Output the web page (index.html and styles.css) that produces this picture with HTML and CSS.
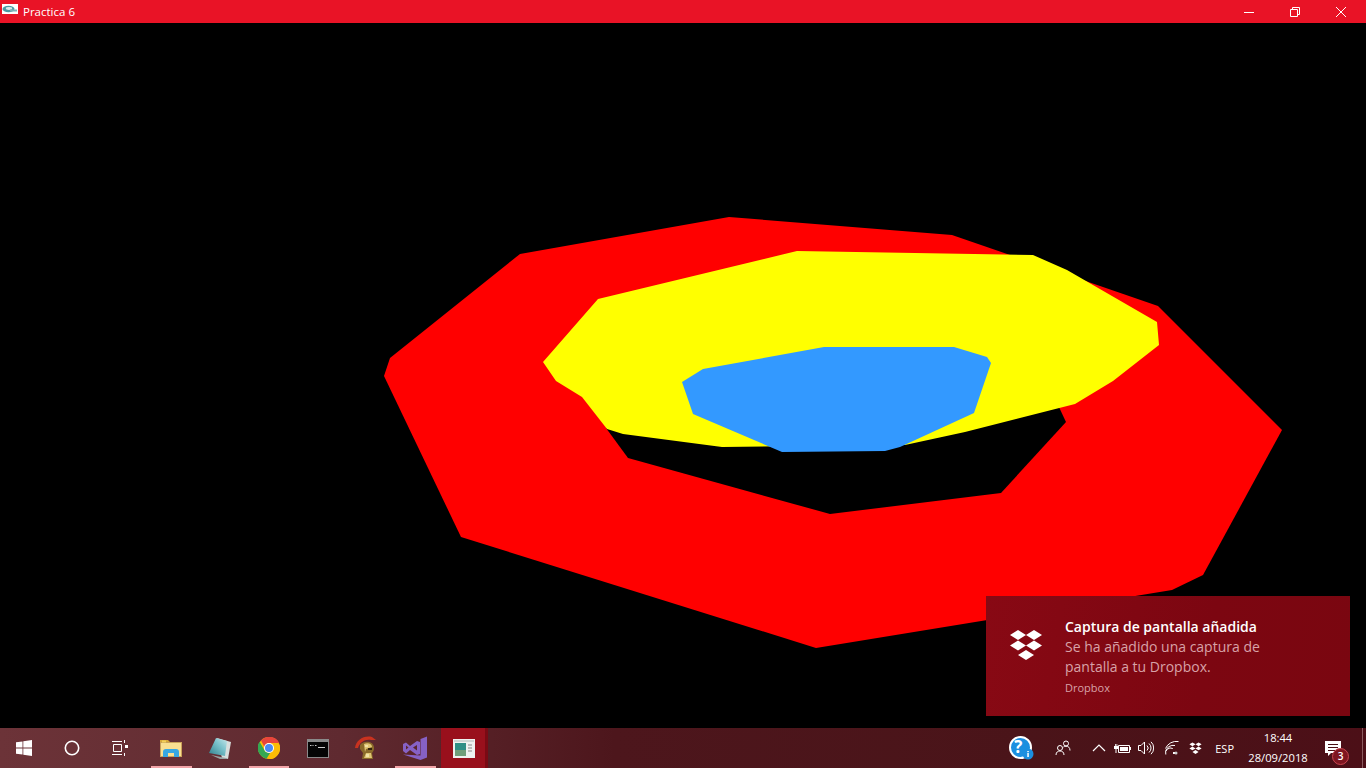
FILE: index.html
```html
<!DOCTYPE html>
<html lang="es">
<head>
<meta charset="utf-8">
<title>Practica 6</title>
<link rel="stylesheet" href="styles.css">
</head>
<body>
<header class="titlebar">
  <svg class="app-icon" width="16" height="16" viewBox="0 0 16 16"><rect y="2" width="16" height="10" fill="#fff"/><ellipse cx="6.500" cy="7" rx="6" ry="3.200" fill="#4a98a2"/><ellipse cx="7" cy="6.500" rx="3.200" ry="1.400" fill="#d9e8ea"/><rect x="8" y="7.500" width="7" height="2" fill="#7fb2b9"/></svg>
  <span class="title">Practica 6</span>
  <div class="win-controls">
    <button class="win-btn"><svg width="12" height="12" viewBox="0 0 12 12"><path d="M1 6.500h10" stroke="#fff" fill="none"/></svg></button>
    <button class="win-btn"><svg width="12" height="12" viewBox="0 0 12 12"><path d="M1.500 3.500h7v7h-7zM3.500 3.500v-2h7v7h-2" stroke="#fff" fill="none"/></svg></button>
    <button class="win-btn"><svg width="12" height="12" viewBox="0 0 12 12"><path d="M1 1l10 10M11 1L1 11" stroke="#fff" fill="none"/></svg></button>
  </div>
</header>
<main class="canvas">
  <svg class="scene" width="1366" height="705" viewBox="0 23 1366 705">
    <polygon fill="#ff0000" points="729,217 952,235 1158,306 1282,430 1203,575 1172,590 816,648 461,537 384,376 390,358 520,254"/>
    <polygon fill="#000000" points="1058,405 1066,422 1001,493 830,514 628,458 606,428 800,400"/>
    <polygon fill="#ffff00" points="797,251 1033,255 1067,270 1157,322 1159,345 1113,381 1075,404 965,432 905,445 722,447 623,434 607,429 582,397 556,381 543,362 598,299"/>
    <polygon fill="#3399ff" points="824,347 954,347 987,357 991,363 974,413 900,447 885,451 782,452 693,414 682,382 703,369"/>
  </svg>
  <aside class="toast">
    <svg class="toast-logo" width="34" height="31" viewBox="0 0 34 31"><path fill="#fff" d="M9 1l8 5-8 5-8-5zM25 1l8 5-8 5-8-5zM9 11.500l8 5-8 5-8-5zM25 11.500l8 5-8 5-8-5zM17 21l8 5-8 5-8-5z"/></svg>
    <div class="toast-body">
      <div class="toast-title">Captura de pantalla añadida</div>
      <div class="toast-text">Se ha añadido una captura de<br>pantalla a tu Dropbox.</div>
      <div class="toast-source">Dropbox</div>
    </div>
  </aside>
</main>
<footer class="taskbar">
  <div class="task-left">
    <div class="slot"><svg width="16" height="16" viewBox="0 0 16 16"><path fill="#fff" d="M0 2.300l6.500-.9v6.200H0zM7.300 1.300L16 0v7.600H7.300zM0 8.400h6.500v6.200L0 13.700zM7.300 8.400H16V16l-8.700-1.300z"/></svg></div>
    <div class="slot"><svg width="16" height="16" viewBox="0 0 16 16"><circle cx="8" cy="8" r="6.700" fill="none" stroke="#fff" stroke-width="1.600"/></svg></div>
    <div class="slot slot-view"><svg width="16" height="16" viewBox="0 0 16 16"><path fill="none" stroke="#fff" d="M0 1.500h10M0 14.500h10M1.500 4.500h8v7h-8zM12.500 0v3M12.500 13v3"/><rect x="13" y="5" width="3" height="3" fill="#fff"/></svg></div>
    <div class="slot app open"><svg width="22" height="18" viewBox="0 0 22 18"><path fill="#d9a93a" d="M0 1h8l2 2h12v3H0z"/><rect x=".5" y="3.500" width="21" height="14" fill="#f9df91" stroke="#c9a25a"/><rect x="2" y="1.500" width="4" height="2" fill="#f4d15a"/><path fill="#37a7e2" d="M3 18v-5a3 3 0 013-3h10a3 3 0 013 3v5h-5v-4H8v4z"/></svg></div>
    <div class="slot app"><svg width="22" height="21" viewBox="0 0 22 21"><defs><linearGradient id="note" x1="0" y1="1" x2="1" y2="0"><stop offset="0" stop-color="#2f7f8c"/><stop offset=".6" stop-color="#7cc3cc"/><stop offset="1" stop-color="#c8e6ea"/></linearGradient></defs><path fill="#d8dedd" d="M8 0l14 4-3 17-6-1z"/><path fill="#9aa3a3" d="M2 17l15 3 2 1-8 0z"/><path fill="url(#note)" d="M7 0l11 3-2 15L0 15z"/></svg></div>
    <div class="slot app open"><svg width="22" height="22" viewBox="0 0 22 22"><circle cx="11" cy="11" r="11" fill="#fbbc05"/><path fill="#e8453c" d="M11 6h10.200A11 11 0 003 3.500L7 11a4 4 0 014-5z"/><path fill="#fbbc05" transform="rotate(120 11 11)" d="M11 6h10.200A11 11 0 003 3.500L7 11a4 4 0 014-5z"/><path fill="#34a853" transform="rotate(240 11 11)" d="M11 6h10.200A11 11 0 003 3.500L7 11a4 4 0 014-5z"/><circle cx="11" cy="11" r="5" fill="#fff"/><circle cx="11" cy="11" r="4" fill="#4a8af4"/></svg></div>
    <div class="slot app"><svg width="22" height="19" viewBox="0 0 22 19"><rect width="22" height="19" fill="#8a8a8a"/><rect x="1" y="3" width="20" height="15" fill="#050505"/><path fill="none" stroke="#ccc" d="M3 6.500h1.500M5.500 6.500h1M8 6.500h1.500M11 8.500h7"/></svg></div>
    <div class="slot app"><svg width="22" height="24" viewBox="0 0 22 24"><path fill="#c8321f" d="M0 12C1 4 9-1 17 1l4 3-5 0C10 3 5 6 3 12z"/><path fill="#8a6a2a" d="M5 9c4-5 13-4 14 2 .5 3-1 5-2 6l1 6H7l1-6-3-4z"/><path fill="#e0c674" d="M9 8c4-2 8 0 8 3l-6 2-1 3zM11 17h5l1 5H9z"/><path fill="#f1e2a4" d="M11 18h3v3h-3zM10 9h3v2h-3z"/><path fill="#33240c" d="M13 12h4v2h-4z"/></svg></div>
    <div class="slot app open"><svg width="24" height="24" viewBox="0 0 24 24"><path fill="#8661c5" d="M17.500 3L24 .5V21.500L17.500 24 0 18.500l17.500 1z"/><path fill="#8661c5" fill-rule="evenodd" d="M0 8l3-1.500 4 3.500 7-5 3 1v12l-3 1-7-5-4 3.500L0 15zM3 9.500v4l2.500-2zM10 11.500l4 3V9z"/></svg></div>
    <div class="slot app active"><svg width="22" height="19" viewBox="0 0 22 19"><rect width="22" height="19" fill="#eef2f0"/><rect x="1" y="1" width="20" height="2" fill="#cfd6d4"/><rect x="2" y="4" width="11" height="13" fill="#2f8f86"/><rect x="2" y="11" width="11" height="6" fill="#6f9e7a"/><path stroke="#888" d="M15 6h4M15 9h4M15 12h4" fill="none"/></svg><span class="active-edge"></span></div>
  </div>
  <div class="tray">
    <svg class="tray-help" width="25" height="25" viewBox="0 0 25 25"><circle cx="11.500" cy="11.500" r="10.500" fill="#1b8fe0" stroke="#fff" stroke-width="2"/><circle cx="19" cy="18" r="5.500" fill="#1b8fe0"/><rect x="18.300" y="17" width="1.500" height="4" fill="#fff"/><rect x="18.300" y="15" width="1.500" height="1.200" fill="#fff"/></svg>
    <span class="help-q">?</span>
    <svg class="tray-people" width="16" height="16" viewBox="0 0 16 16"><g fill="none" stroke="#fff"><circle cx="5" cy="8" r="2.500"/><path d="M1 15c0-3 2-4 4-4s4 1 4 4"/><circle cx="11" cy="3.500" r="2.500"/><path d="M8.500 7c.7-.5 1.500-.8 2.500-.8 2.300 0 4 1.300 4 4.300"/></g></svg>
    <svg class="tray-chevron" width="14" height="8" viewBox="0 0 14 8"><path d="M1 7l6-6 6 6" fill="none" stroke="#fff" stroke-width="1.200"/></svg>
    <svg class="tray-battery" width="17" height="11" viewBox="0 0 17 11"><path fill="none" stroke="#fff" d="M4.500 2.500h11v7h-11z"/><rect x="6" y="4" width="8" height="4" fill="#fff"/><path fill="#fff" d="M16 4h1v3h-1zM0 3h4v3H0zM1 1h.8v2H1zM2.500 1h.8v2h-.8zM1.500 6h1v4h-1z"/></svg>
    <svg class="tray-sound" width="16" height="14" viewBox="0 0 16 14"><path fill="none" stroke="#fff" d="M.5 4.500h2.500l3.500-3.500v12L3 9.500H.5zM9 4.500a3.500 3.500 0 010 5M11 2.500a6 6 0 010 9M13 .8a8.500 8.500 0 010 12.400"/></svg>
    <svg class="tray-wifi" width="14" height="14" viewBox="0 0 14 14"><path fill="none" stroke="#fff" d="M.5 7.500a12 12 0 0113-7M.5 10.500a8 8 0 019.500-6M.8 13.500a5 5 0 017-6"/><rect x="8" y="11" width="2" height="2" fill="#fff"/><circle cx="11" cy="12" r="1.500" fill="#ccc"/></svg>
    <svg class="tray-dropbox" width="13" height="12" viewBox="0 0 34 31"><path fill="#fff" d="M9 1l8 5-8 5-8-5zM25 1l8 5-8 5-8-5zM9 11.500l8 5-8 5-8-5zM25 11.500l8 5-8 5-8-5zM17 21l8 5-8 5-8-5z"/></svg>
    <span class="lang">ESP</span>
    <div class="clock"><div>18:44</div><div>28/09/2018</div></div>
    <div class="notif">
      <svg width="16" height="15" viewBox="0 0 16 15"><path fill="#fff" d="M0 0h16v12H6l-3 3v-3H0z"/><path stroke="#4a1015" fill="none" d="M3 3.500h10M3 6.500h10M3 9.500h7"/></svg>
      <span class="badge">3</span>
    </div>
    <span class="show-desktop"></span>
  </div>
</footer>
</body>
</html>
```
FILE: styles.css
```css
* { box-sizing: border-box; }
html, body { margin: 0; height: 100%; }
body {
  width: 1366px; height: 768px; overflow: hidden; background: #000;
  display: flex; flex-direction: column;
  font-family: "Open Sans", "Noto Sans", sans-serif; color: #fff;
}
.titlebar {
  height: 23px; flex: none; background: #e91326;
  display: flex; align-items: center; padding-left: 2px;
}
.app-icon { flex: none; margin-top: -3px; }
.title { margin-left: 5px; font-size: 11.500px; }
.win-controls { margin-left: auto; display: flex; padding-right: 2px; }
.win-btn {
  width: 46px; height: 23px; border: 0; padding: 0; background: none;
  display: flex; align-items: center; justify-content: center;
}
.canvas { flex: 1; position: relative; background: #000; }
.scene { display: block; }
.toast {
  position: absolute; left: 986px; top: 573px; width: 364px; height: 120px;
  background: linear-gradient(100deg, #880914 0%, #7c0611 60%, #7a0610 100%); display: flex;
}
.toast-logo { margin: 33px 0 0 23px; flex: none; }
.toast-body { margin-left: 22px; padding-top: 21px; }
.toast-title { font-size: 14px; font-weight: 600; line-height: 20px; }
.toast-text { font-size: 14px; line-height: 20px; color: #d8a2a8; }
.toast-source { font-size: 11px; line-height: 16px; margin-top: 3px; color: #d8a2a8; }
.taskbar {
  height: 40px; flex: none;
  background: linear-gradient(90deg, #6c3338 0%, #5f2a30 25%, #4d161c 45%, #4a1419 75%, #4c0f17 100%);
  display: flex; justify-content: space-between;
}
.task-left { display: flex; }
.slot { width: 48px; height: 40px; display: flex; align-items: center; justify-content: center; position: relative; }
.slot-view { margin-right: 3px; }
.app { width: 48.750px; }
.open::after {
  content: ""; position: absolute; left: 4px; right: 4px; bottom: 0; height: 2px; background: #f2a4a8;
}
.active { background: #99101c; width: 47px; margin-left: 1.500px; padding-right: 1px; }
.active-edge { position: absolute; right: 0; top: 0; bottom: 0; width: 3px; background: #7a0a14; }
.tray { display: flex; align-items: center; position: relative; padding-right: 2px; }
.help-q { position: absolute; left: 5px; top: 8px; font-size: 17px; font-weight: 700; line-height: 22px; }
.tray-people { margin-left: 21px; }
.tray-chevron { margin-left: 21px; }
.tray-battery { margin-left: 8px; }
.tray-sound { margin-left: 7px; }
.tray-wifi { margin-left: 11px; }
.tray-dropbox { margin-left: 10px; }
.lang { margin-left: 13px; font-size: 11px; }
.clock { margin-left: 14px; width: 60px; text-align: center; font-size: 11.200px; line-height: 20px; }
.notif { margin-left: 17px; width: 24px; height: 30px; position: relative; display: flex; align-items: center; }
.badge {
  position: absolute; left: 7px; top: 15px; width: 17px; height: 17px; border-radius: 50%;
  background: #7e1520; border: 1px solid #c8454f; font-size: 10px; line-height: 15px; text-align: center; font-weight: 600;
}
.show-desktop { margin-left: 13px; width: 2px; height: 40px; border-left: 1px solid #8a5a5e; }
```
